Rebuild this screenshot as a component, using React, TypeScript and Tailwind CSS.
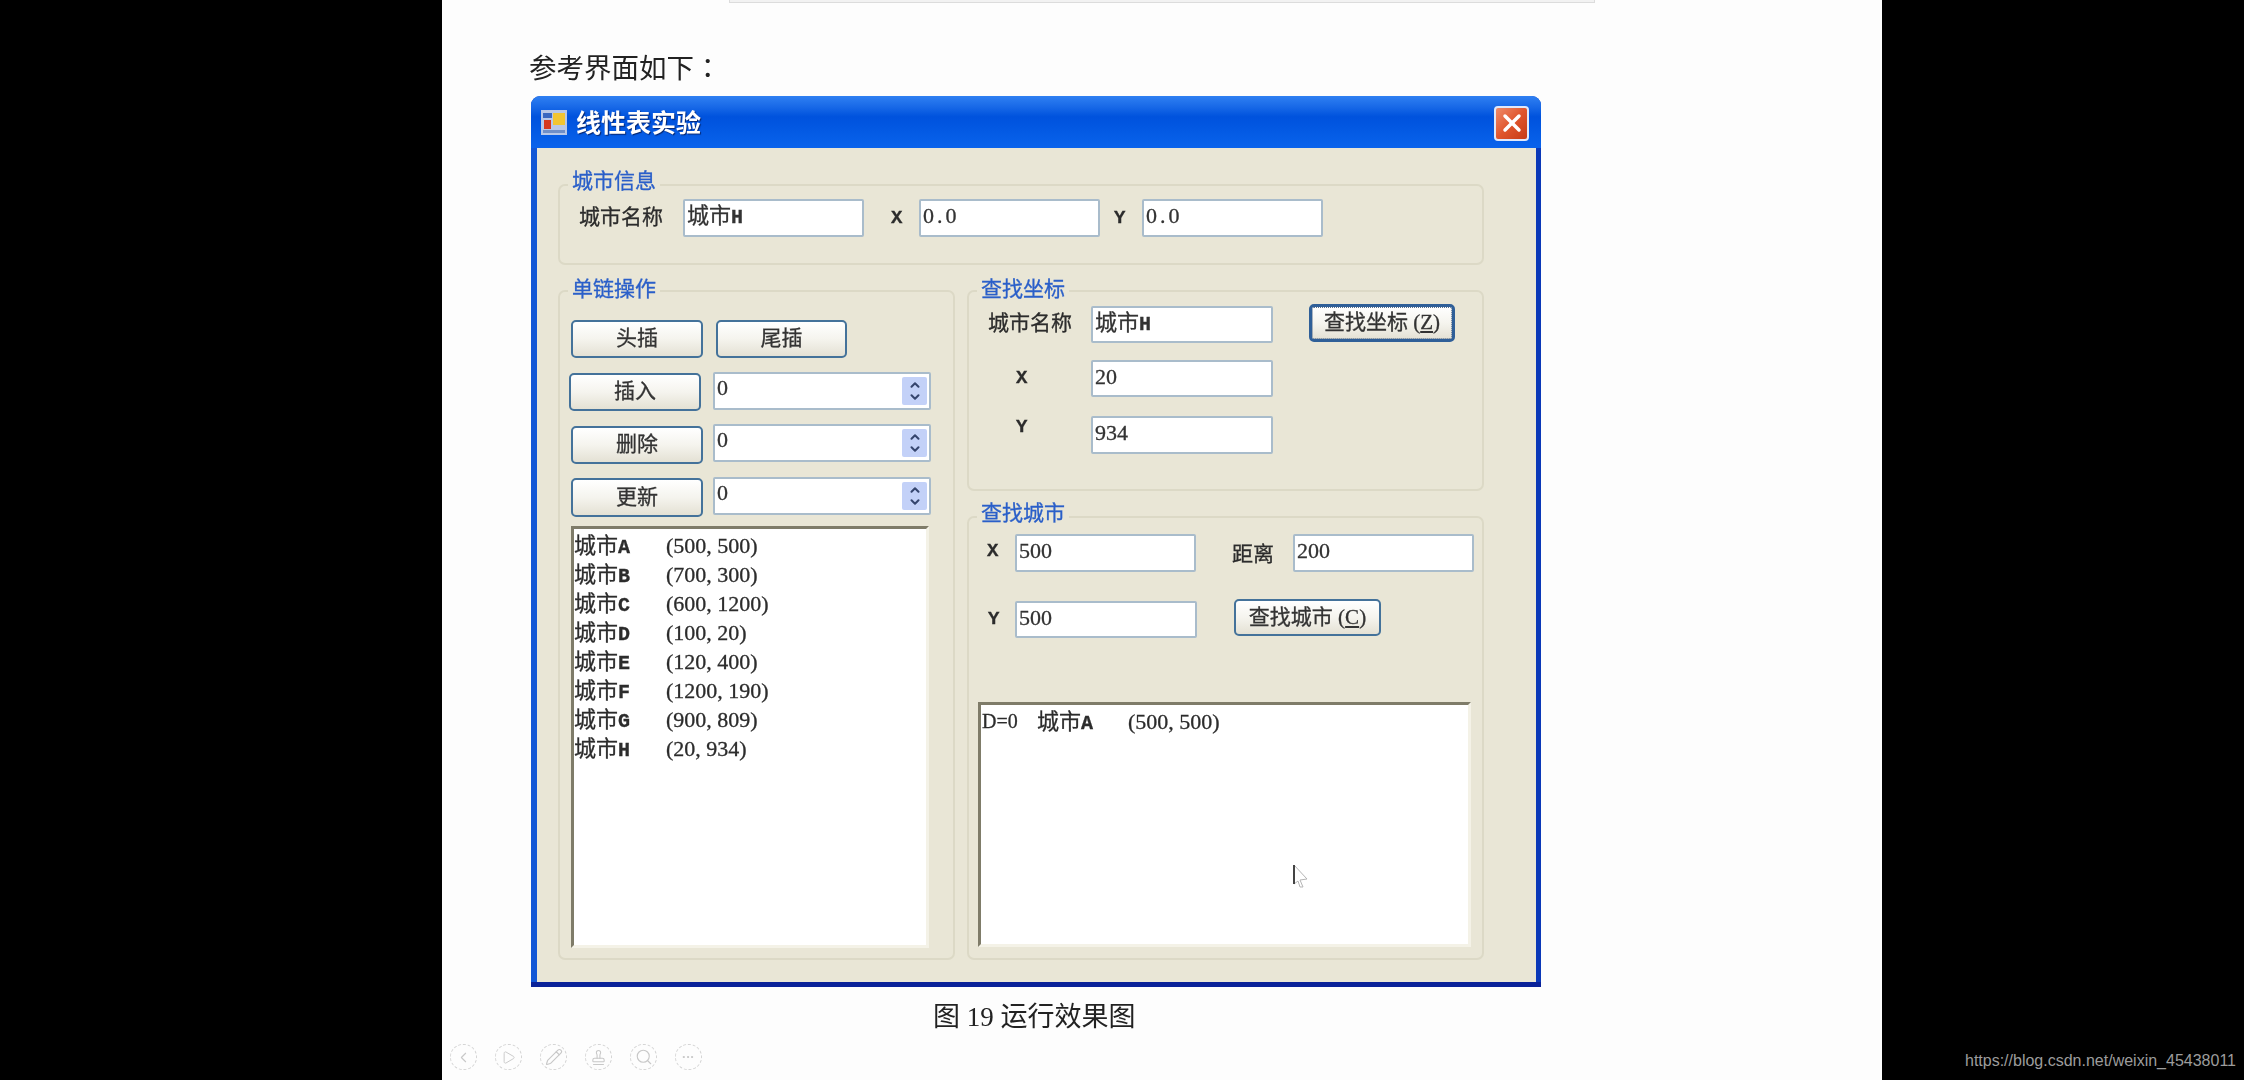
import type { ReactNode } from 'react';
import { ChevronDown, ChevronLeft, ChevronUp, Pencil, Play, Search, Stamp, X } from 'lucide-react';

const cities = [
  ['城市', 'A', '(500, 500)'],
  ['城市', 'B', '(700, 300)'],
  ['城市', 'C', '(600, 1200)'],
  ['城市', 'D', '(100, 20)'],
  ['城市', 'E', '(120, 400)'],
  ['城市', 'F', '(1200, 190)'],
  ['城市', 'G', '(900, 809)'],
  ['城市', 'H', '(20, 934)']
];

const mono = "[font-family:'Liberation_Mono',monospace] font-bold";

function Group({ title, className, legend, children }: { title: string; className: string; legend: string; children: ReactNode }) {
  return (
    <div className={`relative rounded-[7px] border-2 border-[#dcd9c6] ${className}`}>
      <span className={`absolute left-[8px] bg-[#e9e6d6] px-1 text-[21px] leading-[30px] text-[#2a5fc9] [font-family:'Noto_Sans_CJK_SC',sans-serif] ${legend}`}>
        {title}
      </span>
      {children}
    </div>
  );
}

function Field({ children, className }: { children: ReactNode; className: string }) {
  return (
    <div className={`shrink-0 rounded-[2px] border-2 border-[#a9bccb] bg-white pl-[2px] text-[22px] leading-[30px] text-[#333] ${className}`}>
      {children}
    </div>
  );
}

function Btn({ children, className, focused }: { children: ReactNode; className: string; focused?: boolean }) {
  return (
    <div
      className={`flex shrink-0 items-center justify-center rounded-[5px] bg-gradient-to-b from-white via-[#f5f4ee] to-[#e4e1d4] text-[21px] text-[#333] ${
        focused ? 'border-[3px] border-[#2f5f98] outline-1 -outline-offset-4 outline-dotted outline-[#5a6f8a]' : 'border-2 border-[#44729a]'
      } ${className}`}
    >
      {children}
    </div>
  );
}

function Spin() {
  return (
    <div className="flex h-[38px] w-[218px] shrink-0 items-center rounded-[2px] border-2 border-[#a9bccb] bg-white pr-[2px] text-[22px] leading-[28px] text-[#333]">
      <span className="mb-[7px] flex-1 pl-[2px]">0</span>
      <div className="flex h-[28px] w-[25px] flex-col items-center justify-center rounded-[2px] bg-[#c3d1f8] text-[#36466f]">
        <ChevronUp size={14} strokeWidth={3.5} className="-mb-[1px]" />
        <ChevronDown size={14} strokeWidth={3.5} className="-mt-[1px]" />
      </div>
    </div>
  );
}

function Sunken({ className, children }: { className: string; children: ReactNode }) {
  return (
    <div className={`relative shrink-0 border-[3px] border-t-[#7f7c69] border-r-[#f4f2e7] border-b-[#f4f2e7] border-l-[#7f7c69] bg-white pt-[2px] text-[22px] leading-[29px] text-[#2c2c2c] ${className}`}>
      {children}
    </div>
  );
}

function ToolIcon({ children }: { children: ReactNode }) {
  return (
    <div className="flex h-[26px] w-[27px] items-center justify-center rounded-full border border-dashed border-[#d4d4d4] text-[#c8c8c8]">
      {children}
    </div>
  );
}

export default function App() {
  return (
    <div className="relative flex h-[1080px] w-[2244px] overflow-hidden bg-black pl-[442px] [font-family:'Liberation_Serif','Noto_Sans_CJK_SC',serif]">
      <div className="relative h-[1080px] w-[1440px] bg-[#fdfdfd] blur-[0.7px]">
        {/* rest of the box from the page above */}
        <div className="ml-[287px] h-[3px] w-[866px] border-x border-b border-[#dcdcdc] bg-[#f2f2f2]" />

        <p className="mt-[44px] ml-[87px] text-[27.5px] leading-[38px] text-[#222] [font-family:'Noto_Sans_CJK_SC',sans-serif]">
          参考界面如下<span className="[font-family:'Noto_Sans_CJK_TC',sans-serif]">：</span>
        </p>

        {/* window */}
        <div className="mt-[11px] ml-[89px] flex h-[891px] w-[1010px] flex-col overflow-hidden rounded-t-[9px] border-b-[5px] border-b-[#0a2299] bg-[#0a3fc0]">
          <div className="flex h-[52px] shrink-0 items-center bg-gradient-to-b from-[#2f80f2] via-[#0052dd] via-40% to-[#0a63ec] pr-[12px] pl-[10px]">
            <svg width="26" height="25" viewBox="0 0 26 25" className="shrink-0">
              <rect width="26" height="25" fill="#b8c8e8" />
              <rect x="2" y="3" width="9" height="5" fill="#3a68c0" />
              <rect x="12" y="3" width="12" height="12" fill="#f2c531" />
              <rect x="3" y="10" width="7" height="9" fill="#d5381f" />
              <rect x="2" y="20" width="22" height="3" fill="#6f8fc8" />
            </svg>
            <span className="ml-[9px] text-[25px] font-bold text-white [font-family:'Noto_Sans_CJK_SC',sans-serif] [text-shadow:1px_1px_1px_#06266e]">
              线性表实验
            </span>
            <div className="mt-[2px] ml-auto flex h-[35px] w-[35px] items-center justify-center rounded-[4px] border-2 border-[#dfe8fa] bg-gradient-to-br from-[#ee8a68] via-[#e0552c] to-[#c63a16] text-white">
              <X size={28} strokeWidth={3} />
            </div>
          </div>

          <div className="flex flex-1 flex-col border-r-[5px] border-l-[6px] border-r-[#0a38b8] border-l-[#1257d6] bg-[#e9e6d6] pt-[36px] pr-[52px] pl-[21px] [-webkit-text-stroke:0.3px]">
            <Group title="城市信息" legend="-top-[22px]" className="h-[81px] w-[926px] shrink-0">
              <div className="flex items-center pt-[13px] text-[21px] text-[#2c2c2c]">
                <span className="ml-[19px] w-[87px] shrink-0">城市名称</span>
                <Field className="ml-[17px] h-[38px] w-[181px]">城市<span className={`text-[20px] ${mono}`}>H</span></Field>
                <span className={`ml-[27px] w-[10px] shrink-0 text-[19px] ${mono}`}>X</span>
                <Field className="ml-[18px] h-[38px] w-[181px] tracking-[3px]">0.0</Field>
                <span className={`ml-[14px] w-[10px] shrink-0 text-[19px] ${mono}`}>Y</span>
                <Field className="ml-[18px] h-[38px] w-[181px] tracking-[3px]">0.0</Field>
              </div>
            </Group>

            <div className="mt-[25px] flex gap-[12px]">
              <Group title="单链操作" legend="-top-[20px]" className="flex h-[670px] w-[397px] shrink-0 flex-col">
                <div className="mt-[28px] ml-[11px] flex gap-[13px]">
                  <Btn className="h-[38px] w-[132px]">头插</Btn>
                  <Btn className="h-[38px] w-[131px]">尾插</Btn>
                </div>
                <div className="mt-[14px] ml-[9px] flex items-start gap-[12px]">
                  <Btn className="mt-[1px] h-[38px] w-[132px]">插入</Btn>
                  <Spin />
                </div>
                <div className="mt-[13px] ml-[11px] flex items-start gap-[10px]">
                  <Btn className="mt-[2px] h-[38px] w-[132px]">删除</Btn>
                  <Spin />
                </div>
                <div className="mt-[13px] ml-[11px] flex items-start gap-[10px]">
                  <Btn className="mt-[1px] h-[39px] w-[132px]">更新</Btn>
                  <Spin />
                </div>
                <Sunken className="mt-[9px] ml-[11px] h-[422px] w-[358px]">
                  {cities.map(([name, letter, pos]) => (
                    <div key={letter} className="flex h-[29px]">
                      <span className="w-[92px] shrink-0">{name}<span className={`text-[20px] ${mono}`}>{letter}</span></span>
                      <span>{pos}</span>
                    </div>
                  ))}
                </Sunken>
              </Group>

              <div className="flex w-[517px] shrink-0 flex-col gap-[25px]">
                <Group title="查找坐标" legend="-top-[20px]" className="h-[201px] shrink-0">
                  <div className="flex items-start pt-[12px] text-[21px] text-[#2c2c2c]">
                    <span className="mt-[4px] ml-[19px] w-[85px] shrink-0">城市名称</span>
                    <Field className="mt-[2px] ml-[18px] h-[37px] w-[182px]">城市<span className={`text-[20px] ${mono}`}>H</span></Field>
                    <Btn focused className="ml-[36px] h-[38px] w-[146px] text-[20px]">
                      查找坐标&nbsp;(<span className="underline">Z</span>)
                    </Btn>
                  </div>
                  <div className="mt-[17px] flex items-center text-[#2c2c2c]">
                    <span className={`ml-[47px] w-[11px] shrink-0 text-[19px] ${mono}`}>X</span>
                    <Field className="ml-[64px] h-[37px] w-[182px]">20</Field>
                  </div>
                  <div className="mt-[16px] flex items-center text-[#2c2c2c]">
                    <span className={`mb-[16px] ml-[47px] w-[11px] shrink-0 text-[19px] ${mono}`}>Y</span>
                    <Field className="ml-[64px] h-[38px] w-[182px]">934</Field>
                  </div>
                </Group>

                <Group title="查找城市" legend="-top-[22px]" className="flex h-[444px] shrink-0 flex-col">
                  <div className="flex items-center pt-[16px] text-[#2c2c2c]">
                    <span className={`mb-[4px] ml-[18px] w-[10px] shrink-0 text-[19px] ${mono}`}>X</span>
                    <Field className="ml-[18px] h-[38px] w-[181px]">500</Field>
                    <span className="mt-[4px] ml-[36px] w-[42px] shrink-0 text-[21px]">距离</span>
                    <Field className="ml-[19px] h-[38px] w-[181px]">200</Field>
                  </div>
                  <div className="mt-[27px] flex items-start text-[#2c2c2c]">
                    <span className={`mt-[6px] ml-[19px] w-[10px] shrink-0 text-[19px] ${mono}`}>Y</span>
                    <Field className="mt-[2px] ml-[17px] h-[37px] w-[182px]">500</Field>
                    <Btn className="ml-[37px] h-[37px] w-[147px] text-[20px]">
                      查找城市&nbsp;(<span className="underline">C</span>)
                    </Btn>
                  </div>
                  <Sunken className="mt-[64px] ml-[9px] h-[245px] w-[493px]">
                    <div className="flex h-[29px] pl-[1px]">
                      <span className="w-[55px] shrink-0 text-[20px]">D=0</span>
                      <span className="w-[91px] shrink-0">城市<span className={`text-[20px] ${mono}`}>A</span></span>
                      <span>(500, 500)</span>
                    </div>
                    {/* mouse pointer caught in the screenshot */}
                    <svg width="16" height="25" viewBox="0 0 16 25" className="absolute top-[159px] left-[312px]">
                      <path d="M1 1 L14 15 L7 16 L10 23 L7 23 L5 17 L1 20 Z" fill="#fff" stroke="#b5b5b5" strokeWidth="1" />
                      <path d="M1 1 L1 20" stroke="#444" strokeWidth="2" />
                    </svg>
                  </Sunken>
                </Group>
              </div>
            </div>
          </div>
        </div>

        <p className="mt-[14px] ml-[491px] text-[27px] leading-[32px] whitespace-pre text-[#222]">
          图 19 运行效果图
        </p>

        {/* viewer toolbar floats over the page */}
        <div className="absolute top-[1044px] left-[8px] flex gap-[18px]">
          <ToolIcon><ChevronLeft size={17} strokeWidth={1.5} /></ToolIcon>
          <ToolIcon><Play size={15} strokeWidth={1.5} /></ToolIcon>
          <ToolIcon><Pencil size={18} strokeWidth={1.5} /></ToolIcon>
          <ToolIcon><Stamp size={17} strokeWidth={1.5} /></ToolIcon>
          <ToolIcon><Search size={18} strokeWidth={1.5} /></ToolIcon>
          <ToolIcon><span className="text-[9px] leading-none tracking-[1px]">•••</span></ToolIcon>
        </div>
      </div>

      {/* watermark */}
      <span className="absolute top-[1050px] right-[8px] text-[16px] leading-[22px] text-[#9c9c9c] [font-family:'Liberation_Sans',sans-serif]">
        https://blog.csdn.net/weixin_45438011
      </span>
    </div>
  );
}
